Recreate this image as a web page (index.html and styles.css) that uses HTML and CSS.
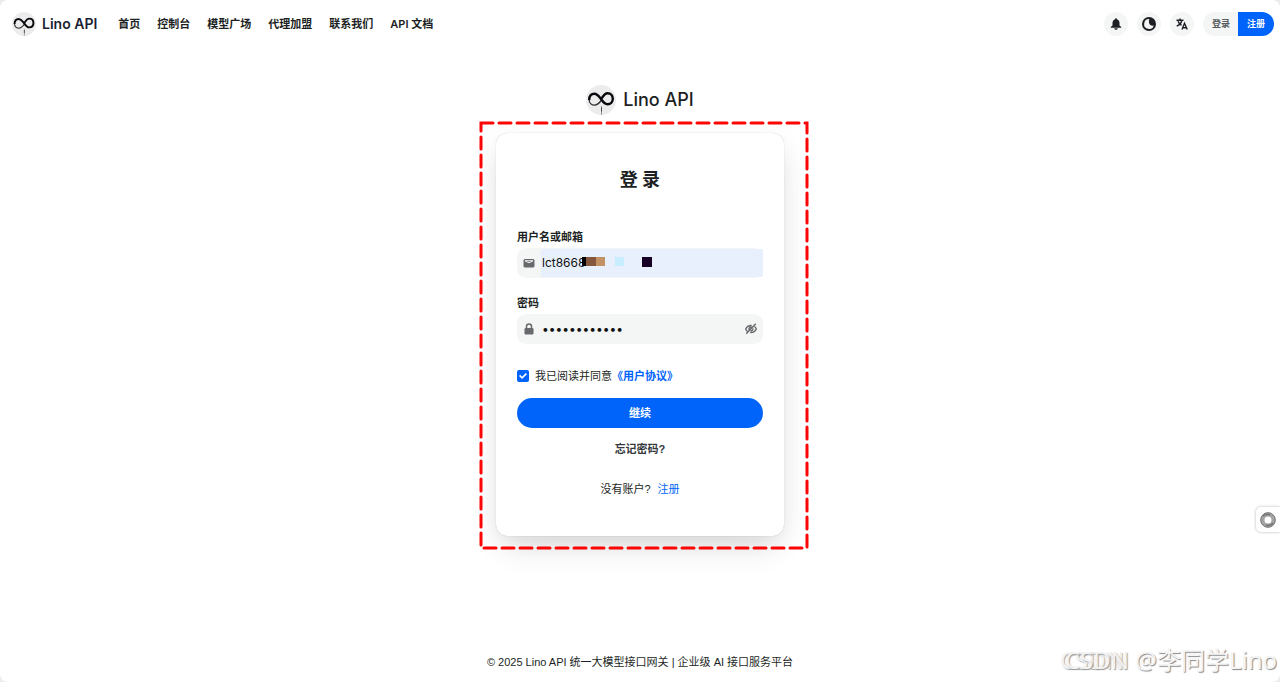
FILE: index.html
```html
<!DOCTYPE html>
<html lang="zh-CN">
<head>
<meta charset="utf-8">
<meta name="viewport" content="width=device-width, initial-scale=1">
<title>Lino API</title>
<link rel="stylesheet" href="styles.css">
</head>
<body>
<svg class="defs" aria-hidden="true">
  <symbol id="logo" viewBox="0 0 30 30">
    <circle cx="15" cy="15" r="15" fill="#ececec"/>
    <path d="M16 14.500C13.500 18 11.500 20.200 8.500 20.200C5.300 20.200 3.200 17.700 3.200 14.400" fill="none" stroke="#303136" stroke-width="1.300"/>
    <path d="M3.200 15C3.200 11 5.300 8.700 8.500 8.700C11.500 8.700 13 11.500 15 14C17 16.800 18.500 19.200 21.500 19.200C24.800 19.200 26.800 16.900 26.800 13.800C26.800 10.700 24.800 8.300 21.500 8.300C18.500 8.300 17 11.500 14.500 15" fill="none" stroke="#08090c" stroke-width="2.400"/>
    <path d="M15.500 21v9" stroke="#999" stroke-width="1"/>
    <path d="M15.500 22.500v4" stroke="#444" stroke-width="1"/>
  </symbol>
</svg>
<div class="page">
  <header class="header">
    <a class="brand" href="#"><svg class="brand-logo" aria-hidden="true"><use href="#logo"/></svg>Lino API</a>
    <nav class="nav">
      <a href="#">首页</a>
      <a href="#">控制台</a>
      <a href="#">模型广场</a>
      <a href="#">代理加盟</a>
      <a href="#">联系我们</a>
      <a href="#">API 文档</a>
    </nav>
    <div class="actions">
      <button class="round" type="button" aria-label="通知">
        <svg class="icon" viewBox="0 0 24 24" fill="currentColor"><path d="M12 .500a2 2 0 0 0-2 2A7 7 0 0 0 5 9v6L1.500 18v1.500h21V18L19 15V9a7 7 0 0 0-5-6.500a2 2 0 0 0-2-2zM8.500 20.500a3.500 3 0 0 0 7 0z"/></svg>
      </button>
      <button class="round" type="button" aria-label="主题">
        <svg class="icon icon-moon" viewBox="0 0 24 24"><circle cx="12" cy="12" r="12" fill="currentColor"/><path d="M12.500 3.500A8.500 8.500 0 1 0 20.300 14.500C15.500 16.500 10 12 12.500 3.500z" fill="#f4f6f5"/><path d="M12 3.500A8.500 8.500 0 1 0 20.300 14.500C15.500 16.500 10 12 12 3.500z" fill="none"/></svg>
      </button>
      <button class="round" type="button" aria-label="语言">
        <svg class="icon" viewBox="0 0 24 24" fill="none" stroke="currentColor" stroke-width="2.800"><path d="M1 4.500h14M8 1v4M1.500 16c5.500-2 9-6 10-11M4 6.500c1.500 4 4 6.500 7 8"/><path d="M12 23l5-12.500L22.500 23M13.800 19.500h6.400"/></svg>
      </button>
      <div class="auth">
        <a class="auth-login" href="#">登录</a>
        <a class="auth-register" href="#">注册</a>
      </div>
    </div>
  </header>

  <main class="main">
    <div class="title"><svg class="title-logo" aria-hidden="true"><use href="#logo"/></svg>Lino API</div>
    <section class="card">
      <svg class="frame" aria-hidden="true"><rect class="frame-line" x="2" y="2" width="100%" height="100%"/></svg>
      <h1 class="heading">登 录</h1>
      <form class="form">
        <label class="label" for="user">用户名或邮箱</label>
        <div class="field">
          <svg class="field-icon" viewBox="0 0 24 24"><rect x="1" y="4" width="22" height="17" rx="3" fill="#67696d"/><path d="M4 7.500h16M4 7.500l5.500 3q2.500 1.500 5 0l5.500-3" fill="none" stroke="#f4f6f5" stroke-width="2"/></svg>
          <input class="input input-filled" id="user" type="text" value="lct8668">
          <svg class="mask" viewBox="0 0 71 11" aria-hidden="true"><path d="M0 1h4v9H0z" fill="#000"/><path d="M4 1h10v9H4z" fill="#87563f"/><path d="M14 1h9v9h-9z" fill="#c29265"/><path d="M33 1h9v9h-9z" fill="#c8edff"/><path d="M60 1h10v10H60z" fill="#160026"/></svg>
        </div>
        <label class="label" for="pass">密码</label>
        <div class="field">
          <svg class="field-icon" viewBox="0 0 24 24"><rect x="3" y="10" width="18" height="13" rx="2.500" fill="#67696d"/><path d="M7 11V7a5 5 0 0 1 10 0v4" fill="none" stroke="#67696d" stroke-width="3"/></svg>
          <input class="input" id="pass" type="password" value="abcdefghijkl">
          <button class="eye" type="button" aria-label="显示密码">
            <svg class="icon" viewBox="0 0 24 24" fill="none" stroke="#67696d" stroke-width="2.800"><path d="M13.500 5C7 4.500 3 8.500 1.500 12c.5 2 1.800 3.800 3.500 5M10.500 19c6.500.5 10.500-3.500 12-7-.5-2-1.800-3.800-3.500-5M21.500 1.500l-19 20M8 13.500c-.8-3 2-6 5-5.200M11 15.700c3 .6 5.500-2.200 5-5"/></svg>
          </button>
        </div>
        <div class="agree">
          <input class="check" id="agree" type="checkbox" checked>
          <label for="agree">我已阅读并同意</label>
          <a class="terms" href="#">《用户协议》</a>
        </div>
        <button class="submit" type="button">继续</button>
        <button class="forgot" type="button">忘记密码?</button>
      </form>
      <p class="signup">没有账户? <a href="#">注册</a></p>
    </section>
  </main>

  <footer class="footer">© 2025 Lino API 统一大模型接口网关 | 企业级 AI 接口服务平台</footer>
  <button class="side" type="button" aria-label="助手">
    <svg class="side-icon" viewBox="0 0 16 16"><circle cx="8" cy="8" r="5.500" fill="#fff" stroke="#a4a4a4" stroke-width="4"/><circle cx="8" cy="8" r="7.300" fill="none" stroke="#777" stroke-width="1"/><path d="M3 4a6 6 0 0 1 7-1M13 11a6 6 0 0 1-7 2" fill="none" stroke="#777" stroke-width="1.500"/></svg>
  </button>
  <div class="watermark"><span class="watermark-site">CSDN</span> @李同学Lino</div>
</div>
</body>
</html>
```
FILE: styles.css
```css
* { box-sizing: border-box; }
html { background: #ececec; }
body {
  margin: 0;
  color: #1c1f23;
  font: 11px/16px "Liberation Sans", "Noto Sans CJK SC", sans-serif;
}
a { color: inherit; text-decoration: none; }
button { border: 0; padding: 0; background: none; color: inherit; font: inherit; cursor: pointer; }
.defs { position: absolute; width: 0; height: 0; }
.page {
  position: relative;
  display: flex;
  flex-direction: column;
  min-height: 100vh;
  overflow: hidden;
  border-radius: 8px;
  background: #fff;
}
.header {
  display: flex;
  align-items: center;
  height: 48px;
  padding: 0 6px 0 12px;
  font-family: Inter, "Noto Sans CJK SC", sans-serif;
}
.brand { display: flex; align-items: center; gap: 6px; font-size: 14px; font-weight: 600; color: #1c1f33; }
.brand-logo { width: 24px; height: 24px; }
.nav { display: flex; gap: 17px; margin-left: 21px; font-size: 11px; font-weight: 600; }
.nav a { white-space: nowrap; }
.actions { display: flex; align-items: center; gap: 9px; margin-left: auto; }
.round {
  display: grid;
  place-items: center;
  width: 24px;
  height: 24px;
  border-radius: 50%;
  background: #f4f6f5;
}
.icon { display: block; width: 12px; height: 12px; }
.icon-moon { width: 14px; height: 14px; }
.auth { display: flex; overflow: hidden; border-radius: 12px; font-size: 9px; line-height: 24px; font-weight: 700; }
.auth-login { padding: 0 8px 0 9px; background: #f4f6f5; color: #56595d; }
.auth-register { padding: 0 9px; background: #0064fa; color: #fff; }

.main { display: flex; flex: 1; flex-direction: column; align-items: center; padding-top: 36px; }
.title {
  display: flex;
  align-items: center;
  gap: 7px;
  margin-bottom: 17px;
  font: 500 18px/32px Inter, sans-serif;
}
.title-logo { width: 30px; height: 30px; }
.card {
  position: relative;
  width: 288px;
  padding: 34px 21px 39px;
  border-radius: 12px;
  box-shadow: 0 0 1px rgba(0, 0, 0, .25), 0 16px 32px -8px rgba(0, 0, 0, .16), 0 4px 24px rgba(0, 0, 0, .04);
}
.card > * { position: relative; }
.card > .frame {
  position: absolute;
  top: -12px;
  left: -17px;
  width: calc(100% + 38px);
  height: calc(100% + 22px);
  overflow: visible;
}
.frame-line { fill: none; stroke: #fb0505; stroke-width: 3; stroke-dasharray: 12 6; stroke-linecap: round; }
.heading { margin: 0 0 36px; text-align: center; font: 700 18px/26px Inter, "Noto Sans CJK SC", sans-serif; }
.label { display: block; margin-bottom: 3px; font-weight: 700; }
.field {
  position: relative;
  display: flex;
  align-items: center;
  height: 30px;
  margin-bottom: 17px;
  border-radius: 9px;
  background: #f4f6f5;
}
.field-icon { flex: none; width: 12px; height: 12px; margin: 0 6px; }
.input {
  flex: 1;
  min-width: 0;
  height: 28px;
  padding: 0 1px 2px;
  border: 0;
  border-radius: 0 2px 2px 0;
  outline: 0;
  background: none;
  color: #111;
  font: 12px Inter, "Noto Sans CJK SC", sans-serif;
}
.input-filled { background: #e8f0fe; }
.mask { position: absolute; left: 65px; top: 8px; width: 71px; height: 11px; }
.eye { margin: 0 6px; }
.agree { display: flex; align-items: center; margin: 24px 0 14px; }
.check {
  appearance: none;
  display: grid;
  place-items: center;
  width: 12px;
  height: 12px;
  margin: 0 6px 0 0;
  border-radius: 2px;
  background: #0064fa;
}
.check::before {
  content: "";
  width: 8px;
  height: 6px;
  background: #fff;
  clip-path: polygon(0 50%, 15% 30%, 38% 62%, 85% 0, 100% 20%, 38% 100%);
}
.terms { color: #0064fa; font-weight: 700; }
.submit { display: block; width: 100%; height: 30px; border-radius: 15px; background: #0064fa; color: #fff; font-weight: 700; }
.forgot { display: block; margin: 13px auto 24px; color: #36393d; font-weight: 600; line-height: 16px; }
.signup { margin: 0; text-align: center; }
.signup a { margin-left: 4px; color: #0064fa; }
.footer { padding: 0 16px 12px; text-align: center; }
.side {
  position: absolute;
  top: 507px;
  right: 0;
  display: grid;
  place-items: center;
  width: 24px;
  height: 25px;
  border-radius: 5px 0 0 5px;
  background: #fff;
  box-shadow: 0 0 3px rgba(0, 0, 0, .3);
}
.side-icon { width: 16px; height: 16px; }
.watermark {
  position: absolute;
  right: 3px;
  bottom: 4px;
  color: #f5f5f5;
  font: 24px/36px "Noto Sans", "Noto Sans CJK SC", sans-serif;
  text-shadow: 1px 1px 1px #888;
  white-space: nowrap;
}
.watermark-site { color: #f2f2f2; text-shadow: 1px 1px 1px #999, -5px 0 0 #f2f2f2, -4px 1px 1px #aaa; }
```
